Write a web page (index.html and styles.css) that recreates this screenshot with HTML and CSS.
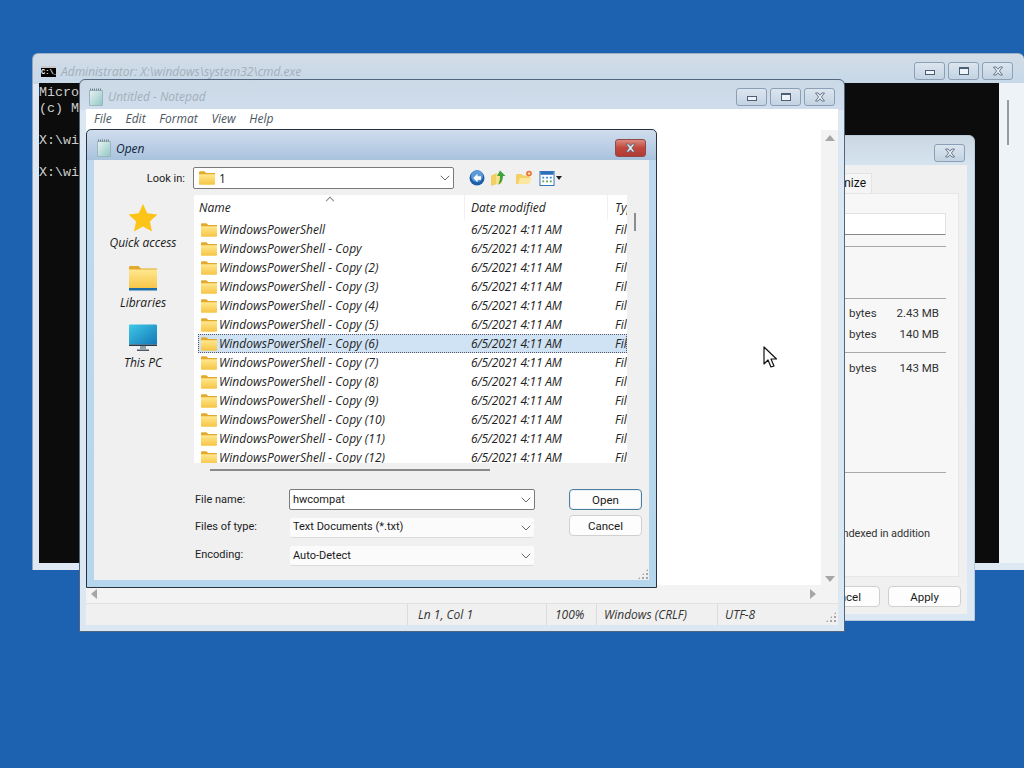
FILE: index.html
```html
<!DOCTYPE html>
<html lang="en">
<head>
<meta charset="utf-8">
<title>Open dialog</title>
<link rel="stylesheet" href="styles.css">
</head>
<body>
<svg class="defs" width="0" height="0" aria-hidden="true">
  <defs>
    <linearGradient id="fg" x1="0" y1="0" x2="0" y2="1"><stop offset="0" stop-color="#ffe88f"/><stop offset="1" stop-color="#f6c445"/></linearGradient>
    <linearGradient id="ng" x1="0" y1="0" x2="1" y2="1"><stop offset="0" stop-color="#e8f3f2"/><stop offset="1" stop-color="#8fc7c5"/></linearGradient>
    <linearGradient id="mg" x1="0" y1="0" x2="1" y2="1"><stop offset="0" stop-color="#3fc8e8"/><stop offset="1" stop-color="#1478b8"/></linearGradient>
    <symbol id="folder" viewBox="0 0 16 14">
      <path d="M0 1.5C0 .7.6.2 1.4.2h4l1.8 1.8H16V4H0z" fill="#e3a92c"/>
      <path d="M0 3.2h16v9.6c0 .6-.5 1-1 1H1c-.6 0-1-.4-1-1z" fill="url(#fg)"/>
    </symbol>
    <symbol id="note" viewBox="0 0 16 18">
      <path d="M1.5 2.5h13v15h-13z" fill="url(#ng)" stroke="#9fb4bc"/>
      <path d="M2 1.500h12" stroke="#6f8288" stroke-width="2" stroke-dasharray="1 1"/>
    </symbol>
    <symbol id="winclose" viewBox="0 0 12 10">
      <path d="M1.5 1h2.600L6 3.200 7.900 1h2.600L7.400 5l3.100 4H7.900L6 6.800 4.100 9H1.500l3.100-4z" fill="#e8eef4" stroke="#4c5f74" stroke-width=".8"/>
    </symbol>
    <symbol id="chev" viewBox="0 0 10 6">
      <path d="M.8.8 5 5 9.200.8" fill="none" stroke="#666" stroke-width="1"/>
    </symbol>
  </defs>
</svg>

<main class="desktop">
  <section class="win cmd">
    <header class="titlebar cmd-title">
      <span class="cmd-icon">C:\_</span>
      <span class="title-text">Administrator: X:\windows\system32\cmd.exe</span>
      <span class="caps">
        <span class="cap"><i class="glyph-min"></i></span>
        <span class="cap"><i class="glyph-max"></i></span>
        <span class="cap"><svg class="glyph-x"><use href="#winclose"/></svg></span>
      </span>
    </header>
    <div class="cmd-body">
      <pre class="console">Microsoft Windows [Version 10.0.22000.1]
(c) Microsoft Corporation. All rights reserved.

X:\windows\system32&gt;notepad

X:\windows\system32&gt;</pre>
      <div class="cmd-scroll"><span class="thumb-v"></span></div>
    </div>
  </section>

  <section class="win props">
    <header class="titlebar props-title">
      <span class="cap"><svg class="glyph-x"><use href="#winclose"/></svg></span>
    </header>
    <div class="props-panel">
      <div class="tabs"><span class="tab">Customize</span></div>
      <div class="tab-page">
        <div class="props-input"></div>
        <hr class="rule rule-a">
        <hr class="rule rule-b">
        <div class="size-row size-a"><span>bytes</span><span>2.43 MB</span></div>
        <div class="size-row"><span>bytes</span><span>140 MB</span></div>
        <hr class="rule rule-c">
        <div class="size-row size-c"><span>bytes</span><span>143 MB</span></div>
        <hr class="rule rule-d">
        <div class="attr">Allow this file to have contents indexed in addition</div>
      </div>
      <div class="props-actions">
        <span class="btn props-btn">Cancel</span>
        <span class="btn props-btn">Apply</span>
      </div>
    </div>
  </section>

  <section class="win notepad">
    <header class="titlebar np-title">
      <svg class="np-icon"><use href="#note"/></svg>
      <span class="title-text">Untitled - Notepad</span>
      <span class="caps">
        <span class="cap"><i class="glyph-min"></i></span>
        <span class="cap"><i class="glyph-max"></i></span>
        <span class="cap"><svg class="glyph-x"><use href="#winclose"/></svg></span>
      </span>
    </header>
    <div class="np-inner">
      <nav class="menu"><span>File</span><span>Edit</span><span>Format</span><span>View</span><span>Help</span></nav>
      <div class="np-edit">
        <div class="np-text"></div>
        <div class="np-vscroll"><i class="arr arr-up"></i><i class="arr arr-down"></i></div>
      </div>
      <div class="np-hscroll"><i class="arr arr-left"></i><i class="arr arr-right"></i></div>
      <footer class="status">
        <span class="st st-a"></span>
        <span class="st st-b">Ln 1, Col 1</span>
        <span class="st st-c">100%</span>
        <span class="st st-d">Windows (CRLF)</span>
        <span class="st st-e">UTF-8</span>
        <span class="grip"></span>
      </footer>
    </div>
  </section>

  <section class="win dialog">
    <header class="titlebar dlg-title">
      <svg class="dlg-icon"><use href="#note"/></svg>
      <span class="dlg-text">Open</span>
      <span class="cap cap-red"><svg class="glyph-x"><use href="#winclose"/></svg></span>
    </header>
    <div class="dlg-panel">
      <div class="toolbar">
        <label class="lookin">Look in:</label>
        <div class="field combo-look">
          <svg class="f16"><use href="#folder"/></svg><span class="look-val">1</span>
          <svg class="chev"><use href="#chev"/></svg>
        </div>
        <div class="tools">
          <svg class="tool" viewBox="0 0 16 16"><circle cx="8" cy="8" r="7.500" fill="#1f5fa8"/><circle cx="8" cy="6" r="6" fill="#5c9ad8"/><path d="M8.500 3.800 4.300 8l4.200 4.200V9.700H12V6.300H8.500z" fill="#fff"/></svg>
          <svg class="tool" viewBox="0 0 16 16"><path d="M0 5.500 6 3v11l-6 2z" fill="#f2cf63"/><path d="M5 4h6v10H5z" fill="#f8e08c"/><path d="M9 .5 14.500 6H12c0 4-1.500 7-5 9 1.500-3 2.200-6 2-9H6z" fill="#3da23b"/></svg>
          <svg class="tool tool-new" viewBox="0 0 16 16"><path d="M0 5.500C0 4.500.5 4 1.500 4h4L7 5.500h7l-2 8.500H0z" fill="#f4d067"/><path d="M2 14 4 8h12l-3 6z" fill="#fbe79f"/><circle cx="13" cy="3.500" r="2.800" fill="#e86f2c"/><circle cx="13" cy="3.500" r="1.200" fill="#fde3b0"/></svg>
          <span class="view-tool">
            <svg class="view-grid" viewBox="0 0 16 16"><rect x=".5" y=".5" width="15" height="15" fill="#fff" stroke="#2a6fb8"/><rect x="1" y="1" width="14" height="3" fill="#2a6fb8"/><path d="M3 6h2v2H3zM7 6h2v2H7zM11 6h2v2h-2z" fill="#2f8fd0"/><path d="M3 10h2v2H3zM7 10h2v2H7zM11 10h2v2h-2z" fill="#5aa05a"/></svg>
            <i class="view-caret"></i>
          </span>
        </div>
      </div>

      <div class="browser">
        <aside class="places">
          <div class="place">
            <svg class="place-icon" viewBox="0 0 30 30"><path d="M15 1l4.300 9.300 10.200 1.200-7.600 6.900 2.100 10.100L15 23.400l-9 5.100 2.100-10.100L.5 11.500l10.200-1.200z" fill="#fcc419"/></svg>
            <span>Quick access</span>
          </div>
          <div class="place">
            <svg class="place-icon" viewBox="0 0 30 30"><path d="M1 4.500C1 3.500 1.700 3 2.500 3h8l2.500 2.500h16V10H1z" fill="#e3a92c"/><path d="M1 6.500h28V26H1z" fill="url(#fg)"/><path d="M1 25h28v2.500H1z" fill="#1d6ea8"/></svg>
            <span>Libraries</span>
          </div>
          <div class="place">
            <svg class="place-icon" viewBox="0 0 30 30"><rect x="1" y="1.500" width="28" height="20" rx="1" fill="url(#mg)"/><path d="M1 21.500h28v1.500H1z" fill="#243a4a"/><path d="M12 23h6v3h-6z" fill="#8fa3ae"/><path d="M9 26.500h12v1.500H9z" fill="#4a5a64"/></svg>
            <span>This PC</span>
          </div>
        </aside>

        <div class="list-wrap">
          <i class="sort-caret"></i>
          <div class="list-head"><span class="c-name">Name</span><span class="c-date">Date modified</span><span class="c-type">Type</span></div>
          <ul class="rows">
            <li class="row"><svg class="f16"><use href="#folder"/></svg><span class="c-name2">WindowsPowerShell</span><span class="c-date">6/5/2021 4:11 AM</span><span class="c-type">File folder</span></li>
            <li class="row"><svg class="f16"><use href="#folder"/></svg><span class="c-name2">WindowsPowerShell - Copy</span><span class="c-date">6/5/2021 4:11 AM</span><span class="c-type">File folder</span></li>
            <li class="row"><svg class="f16"><use href="#folder"/></svg><span class="c-name2">WindowsPowerShell - Copy (2)</span><span class="c-date">6/5/2021 4:11 AM</span><span class="c-type">File folder</span></li>
            <li class="row"><svg class="f16"><use href="#folder"/></svg><span class="c-name2">WindowsPowerShell - Copy (3)</span><span class="c-date">6/5/2021 4:11 AM</span><span class="c-type">File folder</span></li>
            <li class="row"><svg class="f16"><use href="#folder"/></svg><span class="c-name2">WindowsPowerShell - Copy (4)</span><span class="c-date">6/5/2021 4:11 AM</span><span class="c-type">File folder</span></li>
            <li class="row"><svg class="f16"><use href="#folder"/></svg><span class="c-name2">WindowsPowerShell - Copy (5)</span><span class="c-date">6/5/2021 4:11 AM</span><span class="c-type">File folder</span></li>
            <li class="row selected"><svg class="f16"><use href="#folder"/></svg><span class="c-name2">WindowsPowerShell - Copy (6)</span><span class="c-date">6/5/2021 4:11 AM</span><span class="c-type">File folder</span></li>
            <li class="row"><svg class="f16"><use href="#folder"/></svg><span class="c-name2">WindowsPowerShell - Copy (7)</span><span class="c-date">6/5/2021 4:11 AM</span><span class="c-type">File folder</span></li>
            <li class="row"><svg class="f16"><use href="#folder"/></svg><span class="c-name2">WindowsPowerShell - Copy (8)</span><span class="c-date">6/5/2021 4:11 AM</span><span class="c-type">File folder</span></li>
            <li class="row"><svg class="f16"><use href="#folder"/></svg><span class="c-name2">WindowsPowerShell - Copy (9)</span><span class="c-date">6/5/2021 4:11 AM</span><span class="c-type">File folder</span></li>
            <li class="row"><svg class="f16"><use href="#folder"/></svg><span class="c-name2">WindowsPowerShell - Copy (10)</span><span class="c-date">6/5/2021 4:11 AM</span><span class="c-type">File folder</span></li>
            <li class="row"><svg class="f16"><use href="#folder"/></svg><span class="c-name2">WindowsPowerShell - Copy (11)</span><span class="c-date">6/5/2021 4:11 AM</span><span class="c-type">File folder</span></li>
            <li class="row"><svg class="f16"><use href="#folder"/></svg><span class="c-name2">WindowsPowerShell - Copy (12)</span><span class="c-date">6/5/2021 4:11 AM</span><span class="c-type">File folder</span></li>
          </ul>
        </div>
        <div class="list-vscroll"><span class="thumb-list"></span></div>
      </div>
      <div class="list-hscroll"><span class="thumb-h"></span></div>

      <div class="form">
        <div class="fields">
          <label class="flabel lab-1">File name:</label>
          <div class="field input-name">hwcompat<svg class="chev"><use href="#chev"/></svg></div>
          <label class="flabel lab-2">Files of type:</label>
          <div class="field combo-soft soft-1">Text Documents (*.txt)<svg class="chev"><use href="#chev"/></svg></div>
          <label class="flabel lab-3">Encoding:</label>
          <div class="field combo-soft soft-2">Auto-Detect<svg class="chev"><use href="#chev"/></svg></div>
        </div>
        <div class="buttons">
          <span class="btn btn-default">Open</span>
          <span class="btn">Cancel</span>
        </div>
      </div>
      <span class="grip"></span>
    </div>
  </section>

  <svg class="cursor" viewBox="0 0 14 23"><path d="M1 1v17l4-4 3 7 3-1-3-7h5.500z" fill="#fff" stroke="#111" stroke-width="1.200" stroke-linejoin="round"/></svg>
</main>
</body>
</html>
```
FILE: styles.css
```css
* { box-sizing: border-box; }
html, body { margin: 0; padding: 0; }
body { font-family: "Open Sans", "Noto Sans", sans-serif; font-size: 12px; color: #1a1a1a; background: #1c62b0; }
.defs { position: absolute; }
.desktop { position: relative; width: 1024px; height: 768px; overflow: hidden; background: #1c62b0; }

.win { position: absolute; border-radius: 6px 6px 0 0; }
.titlebar { display: flex; align-items: center; }
.title-text { font-style: italic; color: #a3aeb9; }

.caps { display: flex; gap: 3px; margin-left: auto; }
.cap { display: flex; align-items: center; justify-content: center; width: 31px; height: 18px; border: 1px solid #8b9fb5; border-radius: 3px; background: linear-gradient(#dbe5ef, #c4d3e2); }
.cap-red { margin-left: auto; background: linear-gradient(#dd8a80, #c0473c 50%, #b23c32); border-color: #8d4a48; }
.glyph-min { display: block; width: 10px; height: 5px; margin-top: 3px; border: 1px solid #4c5f74; background: #f0f4f8; }
.glyph-max { display: block; width: 10px; height: 8px; border: 1px solid #4c5f74; border-top-width: 2px; background: #eef3f8; }
.glyph-x { width: 12px; height: 10px; }
.cap-red .glyph-x { width: 13px; height: 10px; }

/* command prompt */
.cmd { left: 32px; top: 53px; width: 992px; height: 517px; background: linear-gradient(#d2dce6 0, #c6d8e8 30px, #dde8f2 30px); padding: 0 0 7px 6px; border-top: 1px solid #9fb0c2; border-left: 1px solid #8fa4ba; }
.cmd-title { height: 29px; padding: 5px 11px 0 0; }
.cmd-icon { display: block; width: 15px; height: 11px; margin: 0 5px 0 2px; background: #000; border-top: 2px solid #c8c8c8; color: #fff; font: 700 7px/9px "Liberation Mono", monospace; overflow: hidden; }
.cmd-body { display: flex; height: 480px; }
.console { flex: 0 0 960px; margin: 0; padding: 2px 0 0; background: #0c0c0c; color: #cccccc; font: 13.330px/16px "Liberation Mono", monospace; overflow: hidden; }
.cmd-scroll { flex: 1; background: #eef3f7; padding: 17px 0 0 8px; }
.thumb-v { display: block; width: 2px; height: 45px; background: #9a9a9a; }

/* properties */
.props { left: 700px; top: 135px; width: 275px; height: 486px; background: linear-gradient(#cbd8e4, #d6e4f0 30px, #dce8f4); border: 1px solid #b9cadb; padding: 0 7px 7px; }
.props-title { height: 29px; justify-content: flex-end; padding: 4px 2px 0 0; }
.props-panel { height: 449px; background: #f0f0f0; padding: 8px 8px 0 9px; }
.tabs { display: flex; justify-content: flex-end; height: 20px; padding-right: 87px; }
.tab { display: block; width: 70px; height: 20px; line-height: 19px; text-align: right; padding-right: 5px; background: #f5f5f5; border: 1px solid #e4e4e4; border-bottom: 0; color: #111; white-space: nowrap; font-family: Roboto, sans-serif; font-size: 12px; }
.tab-page { height: 384px; background: #f7f7f7; border: 1px solid #e6e6e6; padding: 19px 12px 0 100px; }
.props-input { height: 22px; background: #fff; border: 1px solid #e2e2e2; border-bottom-color: #888; }
.rule { height: 1px; margin: 0; border: 0; background: #a8a8a8; }
.rule-a { margin-top: 11px; }
.rule-b { margin-top: 51px; }
.rule-c { margin-top: 7px; }
.size-row { display: flex; justify-content: space-between; height: 21px; line-height: 21px; padding: 0 7px 0 31px; font-family: Roboto, sans-serif; font-size: 11.500px; color: #333; }
.size-a { margin-top: 4px; }
.size-c { margin-top: 5px; margin-bottom: 93px; }
.attr { margin: 53px 0 0 -100px; padding-left: 12px; width: 212px; line-height: 16px; white-space: nowrap; color: #333; font-family: Roboto, sans-serif; font-size: 11px; letter-spacing: -.1px; direction: rtl; overflow: hidden; }
.props-actions { display: flex; justify-content: flex-end; gap: 8px; margin: 9px -2px 0 0; }
.props-btn { width: 73px; height: 20px; }

/* notepad */
.notepad { left: 79px; top: 79px; width: 766px; height: 553px; background: linear-gradient(#cbd8e5, #cfdded 30px, #dbe7f2 30px); border: 1px solid #51657c; padding: 0 6px 6px; }
.np-title { height: 29px; padding: 4px 3px 0 0; }
.np-icon { width: 16px; height: 18px; margin: 0 4px 0 2px; }
.np-inner { height: 516px; display: flex; flex-direction: column; background: #f0f0f0; }
.menu { height: 21px; display: flex; gap: 13.700px; padding-left: 8px; background: #fff; line-height: 19px; font-style: italic; color: #4c5560; }
.np-edit { display: flex; height: 455px; background: #fff; }
.np-text { flex: 1; }
.np-vscroll { position: relative; flex: 0 0 17px; background: #f3f3f3; }
.np-hscroll { position: relative; height: 18px; background: #f3f3f3; }
.arr { position: absolute; width: 0; height: 0; border-style: solid; border-color: transparent; }
.arr-up { left: 4px; top: 5px; border-width: 0 5px 6px; border-bottom-color: #a6a6a6; }
.arr-down { left: 4px; bottom: 3px; border-width: 6px 5px 0; border-top-color: #a6a6a6; }
.arr-left { left: 5px; top: 4px; border-width: 5px 6px 5px 0; border-right-color: #a6a6a6; }
.arr-right { right: 22px; top: 4px; border-width: 5px 0 5px 6px; border-left-color: #a6a6a6; }
.status { position: relative; display: flex; height: 22px; background: #f0f0f0; border-top: 1px solid #e2e2e2; line-height: 21px; font-style: italic; color: #333; }
.st { display: block; padding-left: 10px; border-right: 1px solid #dcdcdc; }
.st-a { width: 322px; }
.st-b { width: 139px; }
.st-c { width: 50px; padding-left: 8px; }
.st-d { width: 121px; padding-left: 7px; }
.st-e { padding-left: 7px; border: 0; }
.grip { position: absolute; right: 2px; bottom: 3px; width: 10px; height: 10px; background: radial-gradient(circle at 1px 1px, #a5a5a5 1px, transparent 1.300px) 0 0 / 4px 4px; clip-path: polygon(100% 0, 100% 100%, 0 100%); }

/* open dialog */
.dialog { left: 86px; top: 129px; width: 571px; height: 459px; background: linear-gradient(#cfdded 0, #a9c3de 30px, #bcd9ef 30px, #b5d6ec); border: 1px solid #27323e; padding: 0 7px 7px; border-radius: 5px 5px 0 0; }
.dlg-title { height: 30px; padding: 6px 3px 0 0; }
.dlg-icon { width: 16px; height: 18px; margin: 0 4px 0 2px; }
.dlg-text { font-style: italic; color: #10243c; }
.dlg-panel { position: relative; height: 420px; background: #f0f0f0; padding-top: 7px; font-family: Roboto, sans-serif; font-size: 11px; }
.toolbar { display: flex; align-items: center; height: 22px; }
.lookin { width: 91px; text-align: right; }
.field { position: relative; display: flex; align-items: center; border: 1px solid #7a7a7a; border-radius: 2px; background: #fff; }
.combo-look { width: 261px; height: 22px; margin-left: 8px; padding-left: 5px; }
.look-val { margin-left: 4px; font-family: "Open Sans", sans-serif; font-size: 12px; }
.f16 { flex: none; width: 16px; height: 14px; }
.chev { position: absolute; right: 3px; top: 50%; width: 10px; height: 6px; margin-top: -3px; }
.tools { display: flex; align-items: center; gap: 6px; margin-left: 15px; }
.tool { width: 16px; height: 16px; }
.tool-new { margin-left: 3px; }
.view-tool { display: flex; align-items: center; gap: 1px; margin-left: 1px; }
.view-grid { width: 16px; height: 15px; }
.view-caret { width: 0; height: 0; border-style: solid; border-width: 4px 3.500px 0; border-color: #222 transparent transparent; }

.browser { display: flex; margin-top: 6px; height: 268px; font-family: "Open Sans", sans-serif; font-size: 12px; }
.places { flex: 0 0 100px; display: flex; flex-direction: column; padding-top: 8px; }
.place { height: 60px; display: flex; flex-direction: column; align-items: center; font-style: italic; }
.place-icon { width: 30px; height: 30px; margin: 0 0 1px -2px; }
.place span { margin-left: -2px; }
.list-wrap { position: relative; flex: 0 0 433px; background: #fff; overflow: hidden; }
.sort-caret { position: absolute; left: 133px; top: 0; width: 6px; height: 6px; border-left: 1px solid #888; border-top: 1px solid #888; transform: rotate(45deg) translate(2px, 2px); }
.list-head { display: flex; height: 25px; align-items: center; font-style: italic; color: #222; }
.list-head .c-name { flex: 0 0 271px; padding-left: 5px; border-right: 1px solid #f0f0f0; height: 25px; line-height: 25px; }
.c-date { flex: 0 0 143px; padding-left: 6px; white-space: nowrap; letter-spacing: -.2px; }
.c-type { padding-left: 7px; white-space: nowrap; }
.list-head .c-date { height: 25px; line-height: 25px; border-right: 1px solid #f0f0f0; letter-spacing: 0; }
.rows { list-style: none; margin: 0; padding: 0; }
.row { display: flex; align-items: center; height: 19px; font-style: italic; color: #222; padding-left: 7px; }
.row .f16 { margin-right: 2px; }
.c-name2 { flex: 0 0 246px; white-space: nowrap; letter-spacing: .04px; }
.row .c-date { flex: 0 0 143px; }
.selected { outline: 1px dotted #556; outline-offset: -1px; background: #cfe3f5; margin-left: 4px; padding-left: 3px; }
.list-vscroll { flex: 1; padding: 18px 0 0 7px; }
.thumb-list { display: block; width: 2px; height: 18px; background: #8d8d8d; }
.list-hscroll { height: 26px; padding: 6px 0 0 116px; }
.thumb-h { display: block; width: 280px; height: 2px; background: #8a8a8a; }

.form { display: flex; gap: 34px; padding-left: 101px; }
.fields { display: grid; grid-template-columns: 94px 246px; grid-template-rows: 21px 20px 20px; row-gap: 8px; align-items: center; }
.flabel { color: #222; }
.lab-2, .lab-3 { align-self: start; padding-top: 2px; }
.input-name { height: 21px; padding-left: 3px; }
.combo-soft { height: 20px; padding: 0 0 1px 3px; border: 0; border-bottom: 1px solid #dcdcdc; background: #fbfbfb; margin: 0 1px; }
.soft-1 { padding-bottom: 3px; }
.buttons { display: flex; flex-direction: column; gap: 5px; }
.btn { display: flex; align-items: center; justify-content: center; width: 73px; height: 21px; background: #fdfdfd; border: 1px solid #d0d0d0; border-radius: 4px; color: #1a1a1a; font-family: Roboto, sans-serif; font-size: 11.500px; }
.btn-default { border-color: #4d7f9c; box-shadow: inset 0 0 0 1px #e8f2f8; }
.dlg-panel .grip { right: 1px; bottom: 1px; }

.cursor { position: absolute; left: 763px; top: 346px; width: 14px; height: 23px; }
```
